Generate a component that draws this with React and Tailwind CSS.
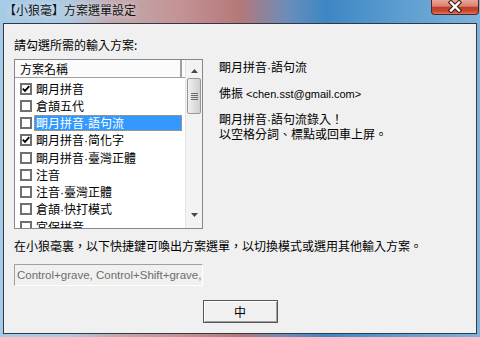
import React from "react";

const items = [
  { name: "朙月拼音", checked: true },
  { name: "倉頡五代", checked: false },
  { name: "朙月拼音·語句流", checked: false, selected: true },
  { name: "朙月拼音·简化字", checked: true },
  { name: "朙月拼音·臺灣正體", checked: false },
  { name: "注音", checked: false },
  { name: "注音·臺灣正體", checked: false },
  { name: "倉頡·快打模式", checked: false },
  { name: "宮保拼音", checked: false },
];

function Dotted({ text }) {
  const parts = text.split("·");
  return (
    <>
      {parts.map((p, i) => (
        <React.Fragment key={i}>
          {i > 0 && <span className="font-['Liberation_Sans',sans-serif]">·</span>}
          {p}
        </React.Fragment>
      ))}
    </>
  );
}

function Check({ checked }) {
  return (
    <div className="w-[12px] h-[12px] shrink-0 border-2 border-[#707070] bg-white flex items-center justify-center">
      {checked && (
        <svg width="8" height="8" viewBox="0 0 8 8">
          <path d="M0.8 3.6 L3 5.9 L7.3 1.2" fill="none" stroke="#000" strokeWidth="1.8" />
        </svg>
      )}
    </div>
  );
}

export default function App() {
  return (
    <div className="w-[480px] h-[337px] flex flex-col overflow-hidden bg-[linear-gradient(90deg,#a6cbe7_0%,#aec9e2_14%,#c2a9ad_24%,#c39294_38%,#b5787a_50%,#6a8dbb_60%,#3d87c4_68%,#5a9bcf_82%,#7db3dc_100%)] font-['Noto_Sans_CJK_TC','Liberation_Sans',sans-serif] text-[12px] text-black">
      {/* title bar */}
      <div className="h-[23px] shrink-0 flex items-start justify-between">
        <div className="pl-[4px] pt-[3px] leading-[14px] text-[12px] text-[#111] [text-shadow:0_0_6px_rgba(255,255,255,0.8)]">
          【小狼毫】方案選單設定
        </div>
        <div className="mr-[1px] w-[48px] h-[15px] rounded-b-[4px] border border-t-0 border-[#5a2320] bg-[linear-gradient(180deg,#e9a898_0%,#d98070_45%,#c23c25_52%,#c94a30_80%,#dd7a5e_100%)] flex items-start justify-center">
          <svg width="18" height="13" viewBox="0 0 18 13" className="mt-[0px]">
            <path d="M5 2.5 L13 10.5 M13 2.5 L5 10.5" stroke="#3a1a18" strokeWidth="4.5" strokeLinecap="square" />
            <path d="M5 2.5 L13 10.5 M13 2.5 L5 10.5" stroke="#ffffff" strokeWidth="2.4" strokeLinecap="square" />
          </svg>
        </div>
      </div>

      {/* client */}
      <div className="flex-1 mx-[3px] mb-[3px] border border-[#2f3a45] bg-[#f0f0f0] flex flex-col pl-[10px]">
        <div className="mt-[14px] leading-[14px]">請勾選所需的輸入方案:</div>

        <div className="mt-[7px] flex items-start">
          {/* list box */}
          <div className="w-[189px] h-[170px] shrink-0 border border-[#828790] bg-white flex overflow-hidden">
            <div className="flex-1 min-w-0 flex flex-col overflow-hidden">
              <div className="h-[18px] shrink-0 flex bg-white">
                <div className="w-[167px] h-full border-r-2 border-b border-[#a0a0a0] bg-[#fbfbfb] pl-[5px] leading-[17px]">
                  方案名稱
                </div>
                <div className="flex-1 h-full border-b border-[#a0a0a0] bg-[#fbfbfb]" />
              </div>
              <div className="pt-[2px] flex flex-col">
                {items.map((it) => (
                  <div key={it.name} className="h-[17.25px] shrink-0 flex items-center pl-[5px] pr-[3px]">
                    <Check checked={it.checked} />
                    {it.selected ? (
                      <div className="ml-[2px] flex-1 h-[16px] bg-[#3399ff] text-white border border-dotted border-[#f0902a] leading-[14px] pl-[1px] whitespace-nowrap">
                        <Dotted text={it.name} />
                      </div>
                    ) : (
                      <div className="ml-[2px] flex-1 h-[16px] leading-[16px] pl-[2px] whitespace-nowrap">
                        <Dotted text={it.name} />
                      </div>
                    )}
                  </div>
                ))}
              </div>
            </div>
            {/* scrollbar */}
            <div className="w-[17px] h-full shrink-0 flex flex-col bg-[#f3f3f3] border-l border-[#e4e4e4]">
              <div className="h-[18px] shrink-0 flex justify-center pt-[9px]">
                <svg width="7" height="4" viewBox="0 0 7 4">
                  <path d="M3.5 0 L7 4 L0 4 Z" fill="#4a4a4a" />
                </svg>
              </div>
              <div className="mx-[1px] h-[36px] shrink-0 rounded-[2px] border border-[#979797] bg-[linear-gradient(90deg,#f0f0f0,#dcdcdc_60%,#cfcfcf)] flex flex-col items-center justify-center gap-[1px]">
                <div className="w-[7px] h-[1px] bg-[#6a6a6a]" />
                <div className="w-[7px] h-[1px] bg-[#6a6a6a]" />
                <div className="w-[7px] h-[1px] bg-[#6a6a6a]" />
                <div className="w-[7px] h-[1px] bg-[#6a6a6a]" />
              </div>
              <div className="flex-1" />
              <div className="h-[18px] shrink-0 flex justify-center pt-[3px]">
                <svg width="7" height="4" viewBox="0 0 7 4">
                  <path d="M0 0 L7 0 L3.5 4 Z" fill="#4a4a4a" />
                </svg>
              </div>
            </div>
          </div>

          {/* right panel */}
          <div className="ml-[16px] pt-[1px] flex flex-col">
            <div className="leading-[14px]"><Dotted text="朙月拼音·語句流" /></div>
            <div className="mt-[11px] leading-[14px] whitespace-nowrap">
              佛振<span className="font-['Liberation_Sans',sans-serif] text-[11px]"> &lt;chen.sst@gmail.com&gt;</span>
            </div>
            <div className="mt-[11px] leading-[14px]"><Dotted text="朙月拼音·語句流錄入！" /></div>
            <div className="leading-[14px]">以空格分詞、標點或回車上屏。</div>
          </div>
        </div>

        <div className="mt-[10px] leading-[14px] whitespace-nowrap">
          在小狼毫裏，以下快捷鍵可喚出方案選單，以切換模式或選用其他輸入方案。
        </div>

        <div className="mt-[11px] w-[189px] h-[22px] border border-t-[#a0a0a0] border-l-[#a0a0a0] border-b-white border-r-white bg-[#f0f0f0] overflow-hidden whitespace-nowrap pl-[2px] leading-[20px] font-['Liberation_Sans',sans-serif] text-[11.5px] text-[#6d6d6d]">
          Control+grave, Control+Shift+grave,
        </div>

        <div className="mt-[14px] self-center -ml-[10px] w-[75px] h-[23px] border border-[#555] bg-[#f0f0f0] shadow-[inset_1px_1px_0_#ffffff,inset_-1px_-1px_0_#a0a0a0] flex items-center justify-center leading-[14px]">
          中
        </div>
      </div>
    </div>
  );
}
